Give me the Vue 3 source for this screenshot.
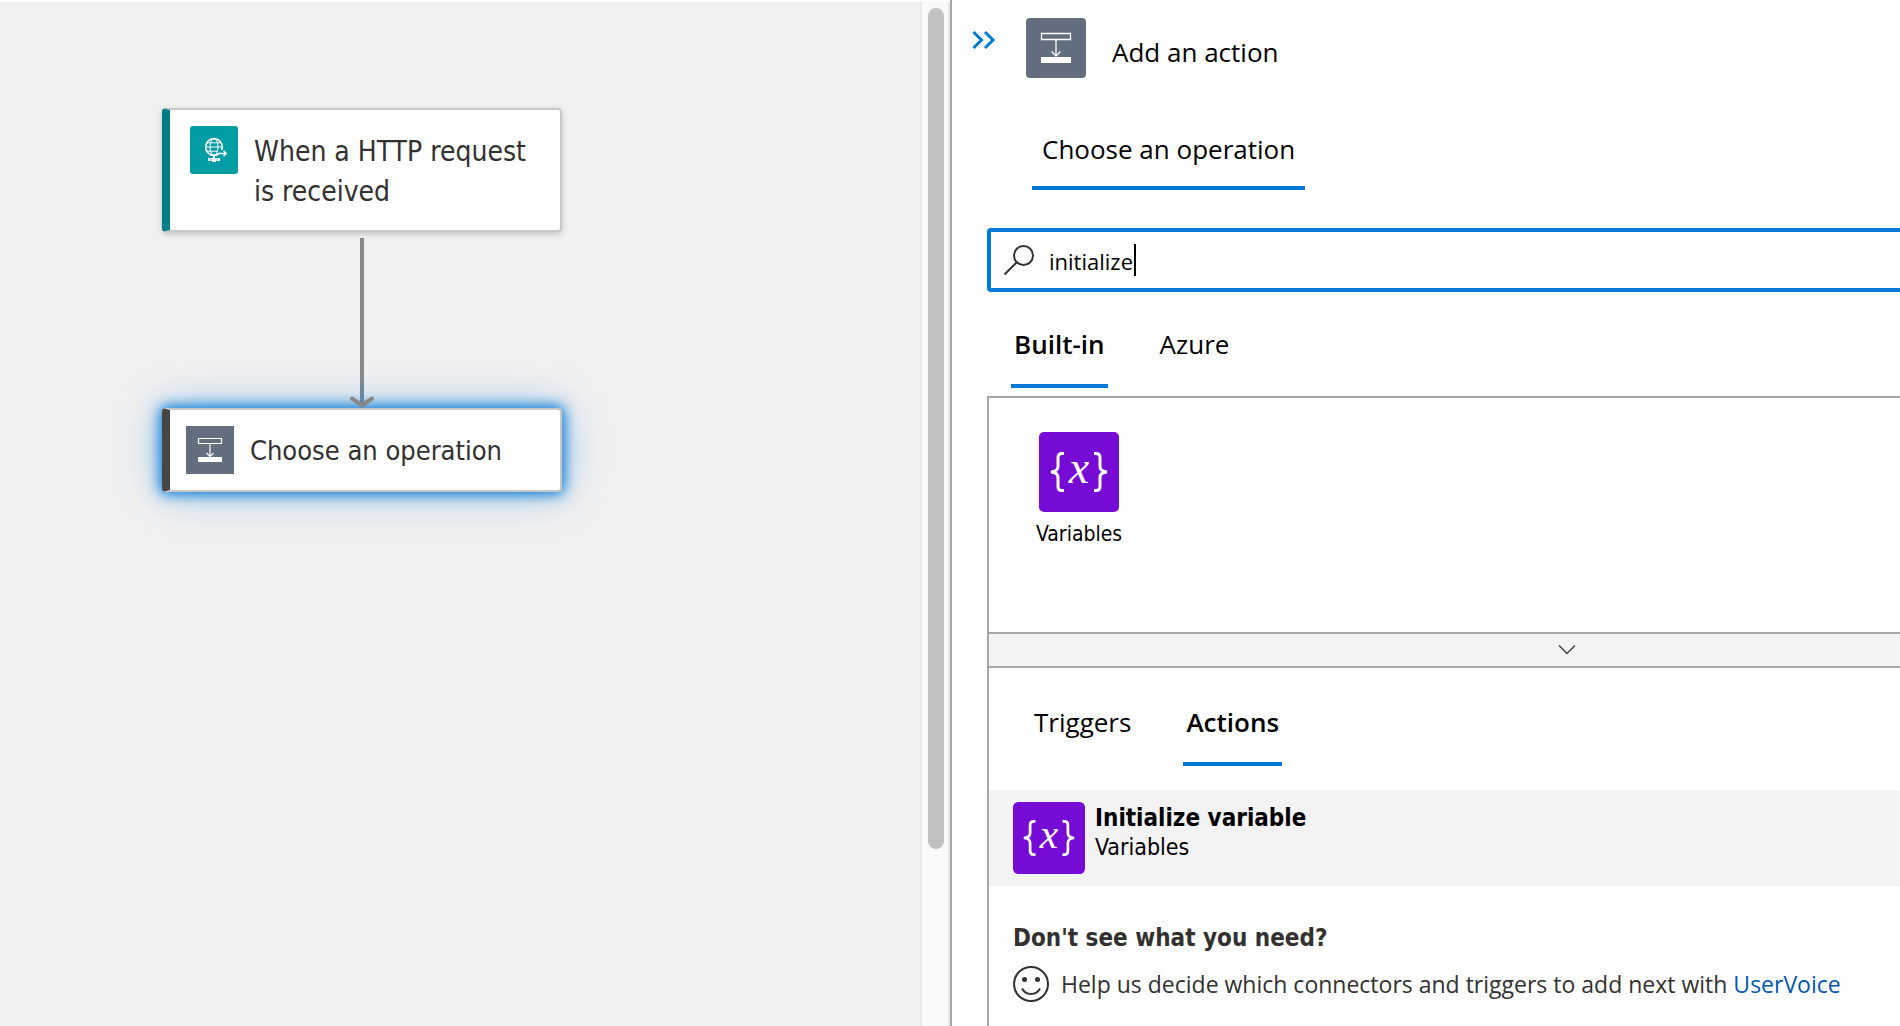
<script setup>
import { ref } from 'vue'

const query = ref('initialize')
const connectorTab = ref('Built-in')
const operationTab = ref('Actions')
const connectorTabs = ['Built-in', 'Azure']
const operationTabs = ['Triggers', 'Actions']
</script>

<template>
  <main class="designer">
    <section class="canvas" aria-label="Workflow">
      <div class="flow">
        <article class="card trigger">
          <svg class="card-icon" viewBox="0 0 48 48" aria-hidden="true">
            <rect width="48" height="48" rx="3" fill="#009da5" />
            <g fill="none" stroke="#fff" stroke-width="1">
              <circle cx="24" cy="21" r="8.4" stroke-width="1.6" />
              <ellipse cx="24" cy="21" rx="4" ry="8.4" />
              <path d="M15.6 21h16.8M17 16.8h14M17 25.2h11" />
            </g>
            <path d="M29 24h8v7h-6z" fill="#009da5" />
            <path d="M30 27.500h6M33.500 24.700l2.800 2.800-2.800 2.800" fill="none" stroke="#fff" stroke-width="1.300" />
            <path d="M23 29h2v3h5v3h-4v1h-4v-1h-4v-3h5z" fill="#fff" />
            <path d="M21 32v3M27 32v3" stroke="#009da5" stroke-width=".6" />
          </svg>
          <h2>When a HTTP request<br />is received</h2>
        </article>
        <svg class="arrow" width="24" height="170" viewBox="0 0 24 170" aria-hidden="true">
          <defs>
            <linearGradient id="shaft" x1="0" y1="0" x2="0" y2="1">
              <stop offset=".82" stop-color="#8a8886" />
              <stop offset="1" stop-color="#5687b0" />
            </linearGradient>
          </defs>
          <rect x="10" y="0" width="4" height="166" fill="url(#shaft)" />
          <path d="M2 160.500l10 7 10-7" fill="none" stroke="#8a8886" stroke-width="4" stroke-linecap="round" />
        </svg>
        <article class="card selected">
          <svg class="card-icon" viewBox="0 0 48 48" aria-hidden="true">
            <rect width="48" height="48" fill="#636f7e" />
            <path d="M12.500 12.500h23v5h-23zM24 17.500v12M20.500 27l3.500 3.500 3.500-3.500" fill="none" stroke="#fff" stroke-width="1.200" />
            <path d="M12 31h24v5H12z" fill="#fff" />
          </svg>
          <h2>Choose an operation</h2>
        </article>
      </div>
      <div class="track"><div class="thumb"></div></div>
    </section>

    <section class="panel" aria-label="Add an action">
      <header class="head">
        <button class="collapse" type="button" aria-label="Collapse panel">
          <svg width="24" height="20" viewBox="0 0 24 20" aria-hidden="true">
            <path d="M1.500 2l8 8-8 8M13 2l8 8-8 8" fill="none" stroke="#0078d7" stroke-width="3" />
          </svg>
        </button>
        <svg class="head-icon" viewBox="0 0 60 60" aria-hidden="true">
          <rect width="60" height="60" rx="4" fill="#636f7e" />
          <path d="M15.500 15.500h29v6h-29zM30 21.500v16M25.500 33.500l4.500 4.500 4.500-4.500" fill="none" stroke="#fff" stroke-width="1.300" />
          <path d="M15 39h30v6H15z" fill="#fff" />
        </svg>
        <h1>Add an action</h1>
      </header>

      <div class="body">
        <button class="tab step" type="button">Choose an operation</button>

        <label class="search">
          <svg width="32" height="32" viewBox="0 0 32 32" aria-hidden="true">
            <circle cx="20.500" cy="11.500" r="9.500" fill="none" stroke="#333" stroke-width="2" />
            <path d="M14 18L1.500 30.500" stroke="#333" stroke-width="2" />
          </svg>
          <span class="field">
            <input v-model="query" type="text" aria-label="Search connectors and actions" />
            <span class="caret"></span>
          </span>
        </label>

        <nav class="tabs connector-tabs" aria-label="Connectors">
          <button
            v-for="tab in connectorTabs"
            :key="tab"
            class="tab"
            :class="{ active: tab === connectorTab }"
            type="button"
            @click="connectorTab = tab"
          >{{ tab }}</button>
        </nav>

        <div class="box">
          <div class="connectors">
            <button class="connector" type="button">
              <svg width="80" height="80" viewBox="0 0 80 80" aria-hidden="true">
                <rect width="80" height="80" rx="5" fill="#770bd6" />
                <path class="brace" d="M25 21.500h-2q-4 0-4 4v9q0 5-7 5.500q7 .5 7 5.500v9q0 4 4 4h2" />
                <text class="ex" x="40" y="51">x</text>
                <path class="brace" d="M55 21.500h2q4 0 4 4v9q0 5 7 5.500q-7 .5-7 5.500v9q0 4-4 4h-2" />
              </svg>
              <span>Variables</span>
            </button>
          </div>

          <button class="expander" type="button" aria-label="Show more connectors">
            <svg width="18" height="12" viewBox="0 0 18 12" aria-hidden="true">
              <path d="M1 1.500l8 8 8-8" fill="none" stroke="#444" stroke-width="1.500" />
            </svg>
          </button>

          <nav class="tabs operation-tabs" aria-label="Operations">
            <button
              v-for="tab in operationTabs"
              :key="tab"
              class="tab"
              :class="{ active: tab === operationTab }"
              type="button"
              @click="operationTab = tab"
            >{{ tab }}</button>
          </nav>

          <button class="operation" type="button">
            <svg width="72" height="72" viewBox="0 0 80 80" aria-hidden="true">
              <rect width="80" height="80" rx="6" fill="#770bd6" />
              <path class="brace" d="M25 21.500h-2q-4 0-4 4v9q0 5-7 5.500q7 .5 7 5.500v9q0 4 4 4h2" />
              <text class="ex" x="40" y="51">x</text>
              <path class="brace" d="M55 21.500h2q4 0 4 4v9q0 5 7 5.500q-7 .5-7 5.500v9q0 4-4 4h-2" />
            </svg>
            <span class="operation-text">
              <strong>Initialize variable</strong>
              <span>Variables</span>
            </span>
          </button>

          <footer class="feedback">
            <h3>Don't see what you need?</h3>
            <p>
              <svg width="36" height="36" viewBox="0 0 36 36" aria-hidden="true">
                <circle cx="18" cy="18" r="17" fill="none" stroke="#323130" stroke-width="2" />
                <circle cx="11.500" cy="13.500" r="2.500" fill="#323130" />
                <circle cx="24.500" cy="13.500" r="2.500" fill="#323130" />
                <path d="M9 22.500c4 7.300 14 7.300 18 0" fill="none" stroke="#323130" stroke-width="2" />
              </svg>
              <span>Help us decide which connectors and triggers to add next with <a href="#uservoice">UserVoice</a></span>
            </p>
          </footer>
        </div>
      </div>
    </section>
  </main>
</template>

<style>
body {
  background: #fff;
}
</style>

<style scoped>
.designer {
  --tahoma: "DejaVu Sans Condensed", "DejaVu Sans", sans-serif;
  --segoe: "Open Sans", "Noto Sans", sans-serif;
  display: flex;
  height: 100vh;
  overflow: hidden;
  font-family: var(--segoe);
  color: #000;
}

h1, h2, h3, p {
  margin: 0;
  font-weight: 400;
}

button {
  border: 0;
  padding: 0;
  background: none;
  color: inherit;
  font: inherit;
  text-align: left;
  cursor: pointer;
}

svg {
  display: block;
  flex: none;
}

/* Workflow canvas */
.canvas {
  display: flex;
  flex: 0 0 50%;
  box-sizing: border-box;
  padding-top: 2px;
}

.flow {
  flex: 1;
  display: flex;
  flex-direction: column;
  align-items: flex-start;
  padding: 106px 0 0 162px;
  background: #f1f1f1;
}

.card {
  box-sizing: border-box;
  display: flex;
  align-items: flex-start;
  gap: 16px;
  width: 400px;
  padding: 16px 14px 16px 20px;
  border: 2px solid #c8c8c8;
  border-left: 8px solid #007e87;
  border-radius: 4px;
  background: #fff;
  color: #323130;
  font-family: var(--tahoma);
}

.card h2 {
  font-size: 28px;
  line-height: 40px;
  white-space: nowrap;
}

.trigger {
  height: 124px;
  box-shadow: 0 2px 6px rgba(0, 0, 0, 0.2);
}

.trigger h2 {
  padding-top: 6px;
}

.selected {
  align-items: center;
  height: 84px;
  padding-left: 16px;
  border-left-color: #484644;
  box-shadow: 0 0 14px 2px #0078d7, 0 0 44px rgba(0, 120, 215, 0.4);
}

.selected h2 {
  padding-top: 2px;
  font-size: 27px;
}

.card-icon {
  width: 48px;
  height: 48px;
}

.arrow {
  position: relative;
  z-index: 1;
  margin: 6px 0 0 188px;
}

.track {
  flex: 0 0 30px;
  box-sizing: border-box;
  padding: 6px 0 0 6px;
  border: solid #e8e8e8;
  border-width: 0 2px;
  background: #fafafa;
}

.thumb {
  width: 16px;
  height: calc(100% - 177px);
  border-radius: 8px;
  background: #c1c1c1;
}

/* Side panel */
.panel {
  flex: 1;
  min-width: 0;
  overflow: hidden;
  border-left: 2px solid #a8a8a8;
}

.head {
  display: flex;
  align-items: flex-start;
  padding: 18px 0 0 20px;
}

.collapse {
  padding-top: 12px;
}

.head-icon {
  width: 60px;
  height: 60px;
  margin: 0 26px 0 30px;
}

h1 {
  font-size: 26px;
  line-height: 36px;
  padding-top: 16px;
}

/* The drawer is wider than the window and is clipped at its right edge */
.body {
  margin: 34px -247px 0 35px;
}

.tab {
  padding: 0 3px 22px;
  border-bottom: 4px solid transparent;
  font-size: 26px;
  line-height: 36px;
  white-space: nowrap;
}

.tab.active {
  border-color: #0078d7;
  font-weight: 600;
}

.step {
  display: block;
  margin-left: 45px;
  padding: 19px 10px;
  border-color: #0078d7;
}

.search {
  display: flex;
  align-items: center;
  gap: 14px;
  box-sizing: border-box;
  height: 64px;
  margin-top: 38px;
  padding: 0 12px;
  border: 4px solid #0078d7;
  border-radius: 4px;
}

.field {
  position: relative;
  flex: 1;
}

.field input {
  display: block;
  box-sizing: border-box;
  width: 100%;
  height: 32px;
  padding: 2px 0 0;
  border: 0;
  outline: 0;
  background: none;
  color: #000;
  font: 22px/30px var(--segoe);
}

.caret {
  position: absolute;
  left: 85px;
  top: 0;
  width: 2px;
  height: 32px;
  background: #000;
}

.tabs {
  display: flex;
  gap: 49px;
}

.connector-tabs {
  padding: 34px 0 8px 24px;
}

.box {
  border: 2px solid #a6a6a6;
}

.connectors {
  height: 200px;
  padding: 34px 0 0 47px;
  font: 21px/28px var(--tahoma);
}

.connector {
  display: flex;
  flex-direction: column;
  align-items: center;
  gap: 8px;
}

.brace {
  fill: none;
  stroke: #fff;
  stroke-width: 3px;
}

.ex {
  fill: #fff;
  font: italic 46px "Liberation Serif", serif;
  text-anchor: middle;
}

.expander {
  display: flex;
  align-items: center;
  justify-content: center;
  box-sizing: border-box;
  width: 100%;
  height: 36px;
  border: solid #a6a6a6;
  border-width: 2px 0;
  background: #f3f3f3;
}

.operation-tabs {
  padding: 36px 0 24px 42px;
}

.operation {
  display: flex;
  align-items: flex-start;
  gap: 10px;
  width: 100%;
  padding: 12px 24px;
  background: #f3f3f3;
  font-family: var(--tahoma);
}

.operation-text {
  display: flex;
  flex-direction: column;
  padding-top: 2px;
  font-size: 23px;
  line-height: 29px;
}

.operation-text strong {
  font-size: 24px;
}

.feedback {
  padding: 36px 24px 24px;
  color: #323130;
}

.feedback h3 {
  font: 700 24px/32px var(--tahoma);
}

.feedback p {
  display: flex;
  align-items: center;
  gap: 12px;
  margin-top: 12px;
  font-size: 23px;
  line-height: 36px;
  white-space: nowrap;
}

.feedback a {
  color: #0058ad;
  text-decoration: none;
}
</style>
